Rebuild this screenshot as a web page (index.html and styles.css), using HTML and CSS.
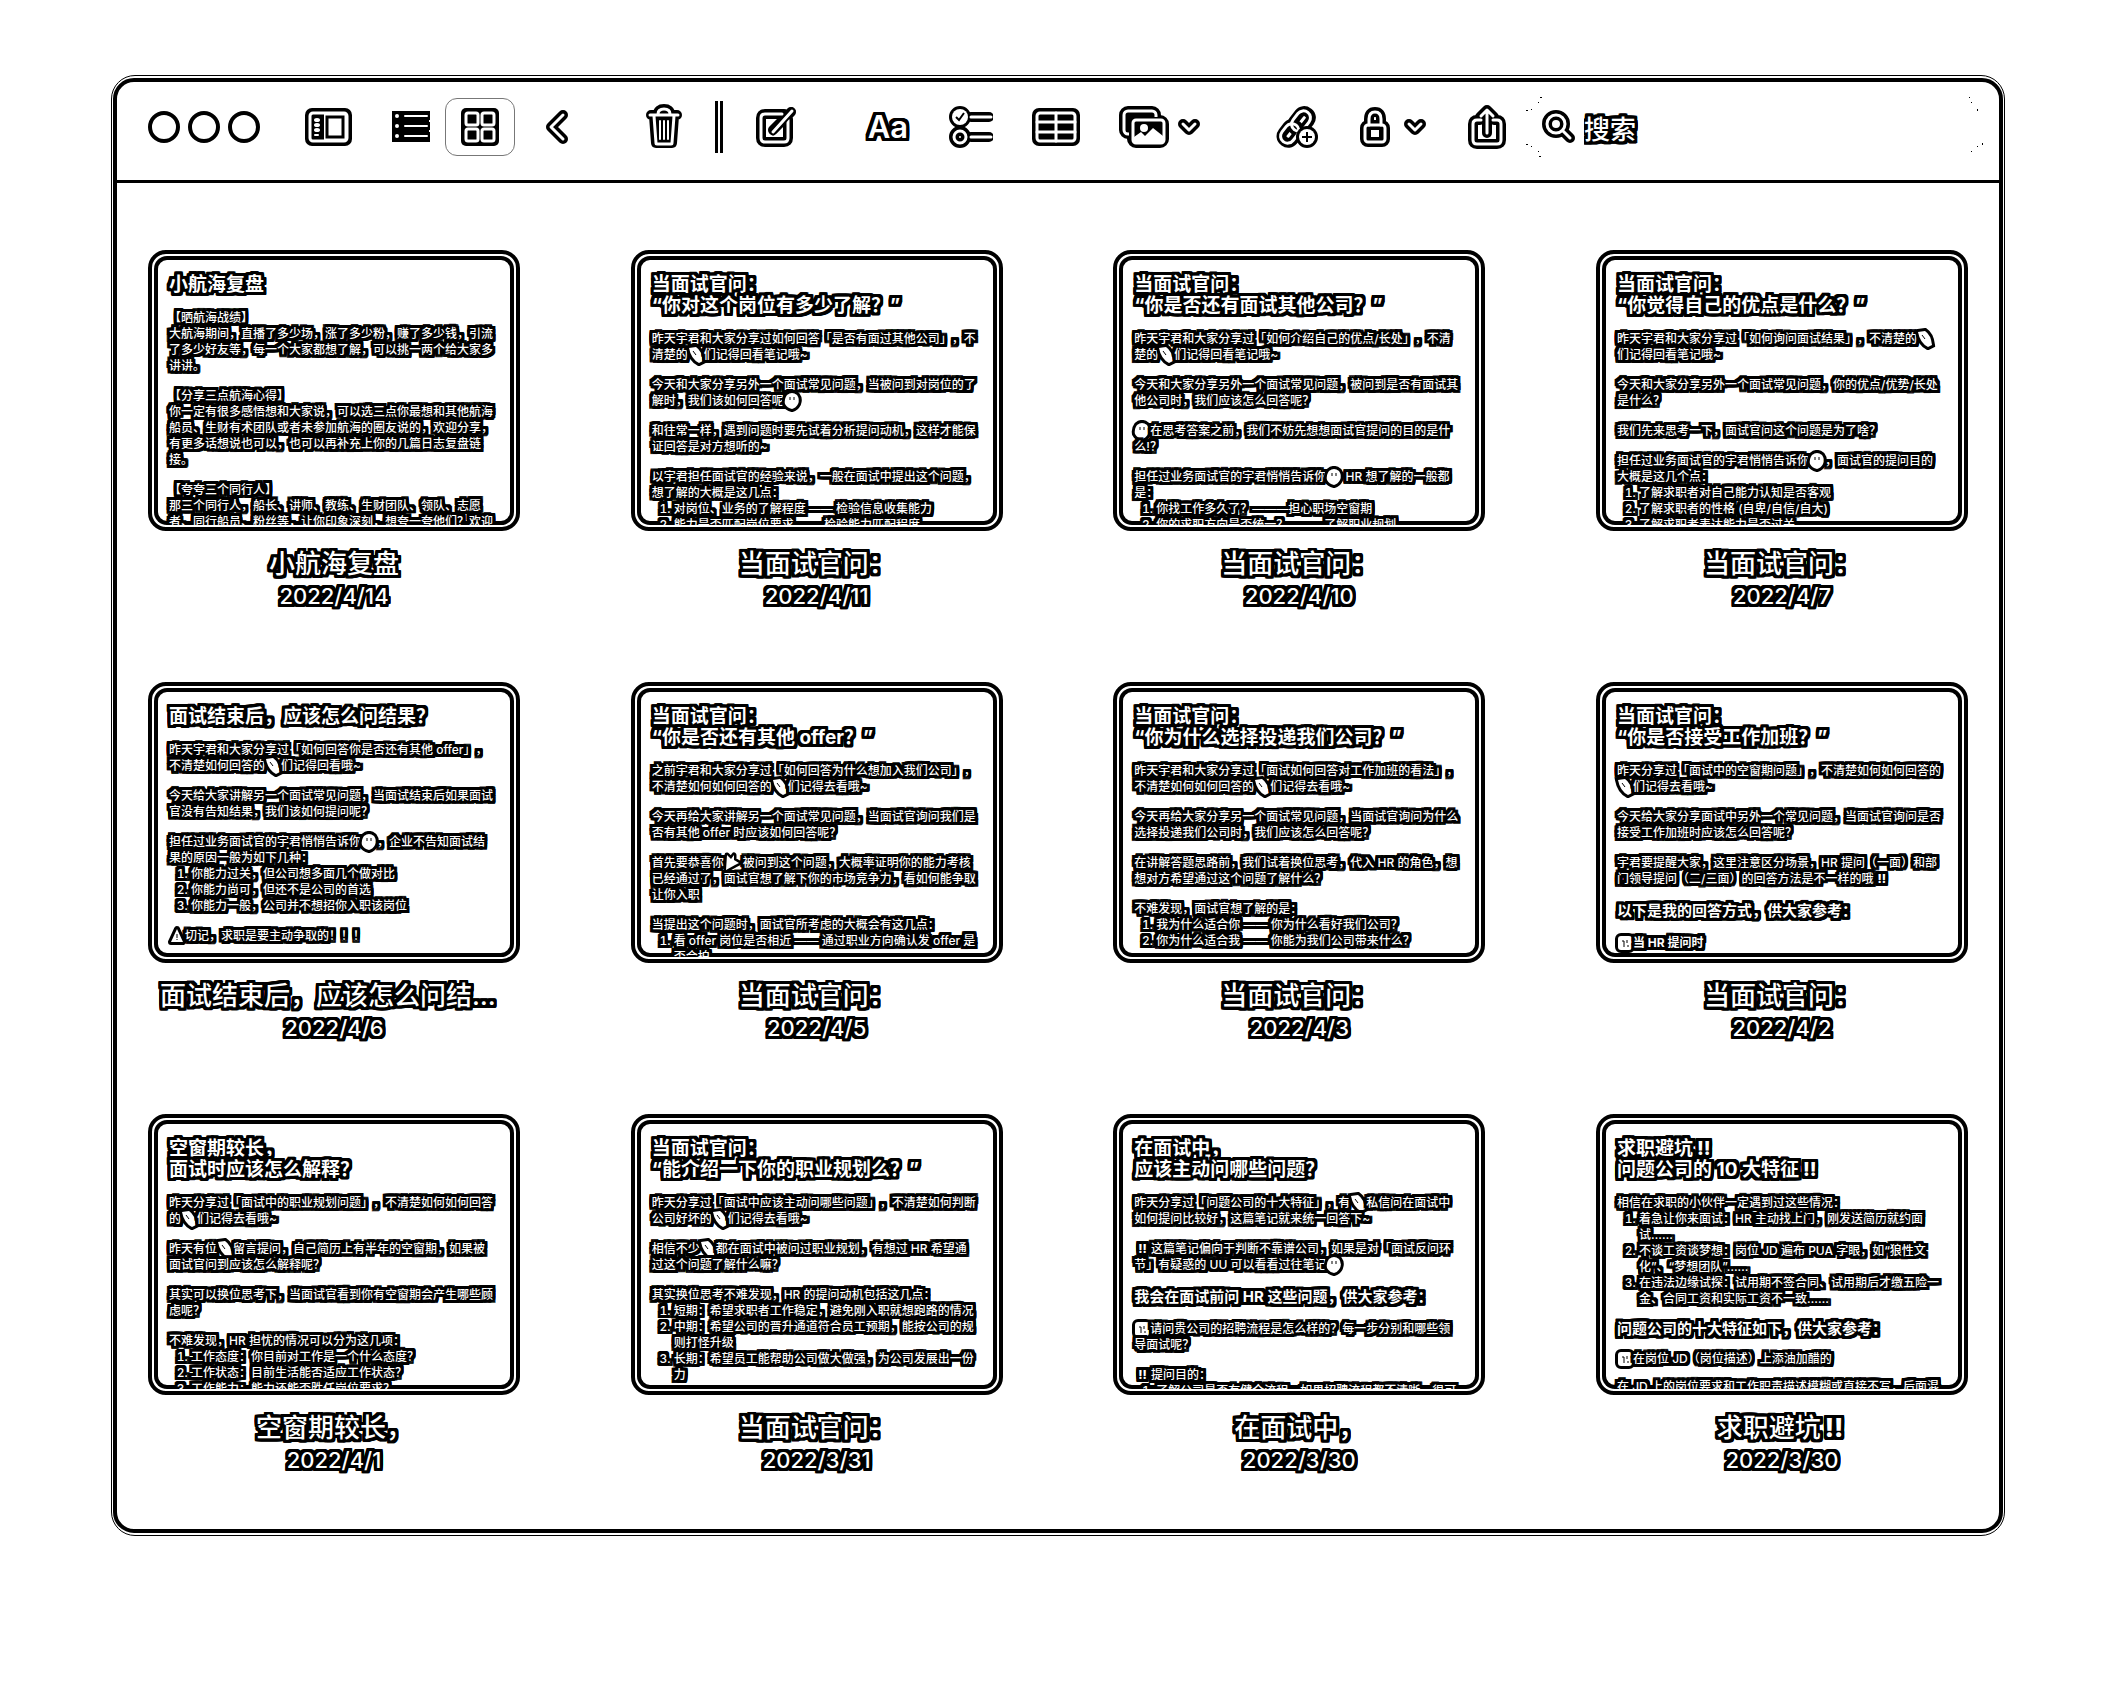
FILE: index.html
```html
<!DOCTYPE html>
<html lang="zh-CN">
<head>
<meta charset="utf-8">
<title>备忘录</title>
<link rel="stylesheet" href="styles.css">
</head>
<body>
<svg class="defs" aria-hidden="true">
  <symbol id="pen" viewBox="-3 -3 22 22"><path d="M1 1l7-1q6 4 7 14l-4 2Q3 12 1 1z" fill="#fff" stroke="#000" stroke-width="6" paint-order="stroke"/><path d="M5 4l3 4" stroke="#000"/></symbol>
  <symbol id="face" viewBox="-3 -3 22 22"><path d="M3 2q5-4 10 0 3 4 1 9-2 4-6 5-5-1-7-5-1-5 2-9z" fill="#fff" stroke="#000" stroke-width="6" paint-order="stroke"/><path d="M6 4v3M10 4v3" stroke="#000"/></symbol>
  <symbol id="warn" viewBox="-3 -3 22 22"><path d="M8 1l6 13H2z" fill="#fff" stroke="#000" stroke-width="6" stroke-linejoin="round" paint-order="stroke"/><path d="M8 6v4M8 11v1" stroke="#000"/></symbol>
  <symbol id="party" viewBox="-3 -3 22 22"><path d="M3 0l4 4 3-4v5l5 3-4 2-9 5z" fill="#fff" stroke="#000" stroke-width="5" stroke-linejoin="round" paint-order="stroke"/></symbol>
  <symbol id="key" viewBox="-3 -3 22 22"><rect x="1" y="1" width="14" height="14" rx="3" fill="#fff" stroke="#000" stroke-width="6" paint-order="stroke"/><path d="M5 6h2v6M10 5v3M11 10v2" fill="none" stroke="#000"/></symbol>
</svg>
<div class="window">
<div class="frame">
  <header class="toolbar">
    <div class="lights">
      <button aria-label="关闭"></button><button aria-label="最小化"></button><button aria-label="缩放"></button>
    </div>
    <button class="tool sidebar-tool" aria-label="边栏"><svg width="48" height="38"><rect width="47" height="38" rx="7"/><rect x="5" y="5" width="37" height="28" rx="3" fill="none" stroke="#fff" stroke-width="3"/><rect x="19" y="6" width="23" height="26" fill="#fff"/><rect x="22" y="9" width="16" height="20" fill="none" stroke="#000" stroke-width="3"/><g class="thin"><ellipse cx="12" cy="12" rx="2" ry="1"/><ellipse cx="12" cy="17" rx="2" ry="1"/><ellipse cx="12" cy="22" rx="2" ry="1"/><path d="M10 27h3"/></g></svg></button>
    <div class="views">
      <button class="tool" aria-label="列表"><svg width="40" height="34"><path d="M1 1h38v31H1z"/><g class="thin"><circle cx="6" cy="6" r="1"/><circle cx="6" cy="16" r="1"/><circle cx="6" cy="26" r="1"/><path d="M14 6h22M14 16h22M14 26h22"/></g><path d="M38 10h3v2h-3zM38 20h3v2h-3z" fill="#fff"/></svg></button>
      <button class="tool selected" aria-label="画廊"><svg width="40" height="38"><rect x="1" y="0" width="38" height="38" rx="5"/><g class="core"><rect x="6" y="5" width="12" height="12" rx="2"/><rect x="22" y="5" width="12" height="12" rx="2"/><rect x="6" y="21" width="12" height="12" rx="2"/><rect x="22" y="21" width="12" height="12" rx="2"/></g></svg></button>
    </div>
    <button class="tool back-tool" aria-label="返回"><svg width="24" height="34"><path class="halo" d="M18 5L6 17l12 12"/><path class="core" d="M18 5L6 17l12 12"/></svg></button>
    <div class="edit">
      <button class="tool" aria-label="删除"><svg width="36" height="46"><g class="halo"><path d="M5 11h26M12 10q0-5 6-5t6 5M8 12l2 27h16l2-27"/></g><path d="M9 12h18l-2 26H11z"/><g class="core"><path d="M4 11h28M12 10q0-5 6-5t6 5M8 12l2 27q0 1 1 1h14q1 0 1-1l2-27"/></g><path class="thin" d="M14 17v18M18 17v18M22 17v18"/></svg></button>
      <span class="divider"></span>
      <button class="tool" aria-label="新建"><svg width="42" height="42"><g class="halo"><path d="M28 8H9q-4 0-4 4v20q0 4 4 4h19q4 0 4-4V13M17 24L35 6"/></g><g class="core"><path d="M26 8H9q-4 0-4 4v20q0 4 4 4h19q4 0 4-4V14"/></g><path class="halo slim" d="M17 26L36 5"/><path class="core" d="M17 26L36 5"/></svg></button>
    </div>
    <div class="format">
      <button class="tool aa" aria-label="格式">Aa</button>
      <button class="tool" aria-label="核对清单"><svg width="44" height="42"><g class="halo"><circle cx="11" cy="11" r="6"/><circle cx="11" cy="31" r="6"/><path d="M22 11h18M22 31h18"/></g><circle cx="11" cy="11" r="8" fill="#fff"/><circle class="core" cx="11" cy="31" r="6"/><path class="core" d="M22 11h20M22 31h20"/><path d="M7 11l3 3 5-7" fill="none" stroke="#000" stroke-width="2"/></svg></button>
      <button class="tool" aria-label="表格"><svg width="48" height="38"><rect width="48" height="38" rx="7"/><g class="core"><rect x="5" y="5" width="38" height="28" rx="3"/><path d="M24 5v28M5 14h38M5 24h38"/></g></svg></button>
      <div class="pair">
        <button class="tool" aria-label="照片"><svg width="50" height="42"><g class="halo"><rect x="5" y="5" width="32" height="23" rx="4"/><rect x="13" y="14" width="32" height="23" rx="4"/></g><path d="M8 8h26v17H8z"/><rect class="core" x="5" y="5" width="32" height="23" rx="4"/><rect x="10" y="11" width="38" height="29" rx="5"/><rect class="core" x="14" y="14" width="31" height="23" rx="3"/><path d="M15 31l7-5 4 4 8-8 10 8v7H15z" fill="#fff"/><circle cx="25" cy="22" r="4" fill="#fff"/></svg></button>
        <button class="tool" aria-label="照片选项"><svg width="22" height="17"><path class="halo" d="M5 5l6 6 6-6"/><path class="core" d="M5 5l6 6 6-6"/></svg></button>
      </div>
    </div>
    <div class="share">
      <button class="tool" aria-label="链接"><svg width="44" height="42"><g class="halo"><rect x="16" y="9" width="22" height="13" rx="6" transform="rotate(-52 27 15)"/><rect x="6" y="21" width="20" height="13" rx="6" transform="rotate(-52 16 27)"/></g><g class="core"><rect x="16" y="8" width="22" height="14" rx="7" transform="rotate(-52 27 15)"/><rect x="5" y="20" width="21" height="14" rx="7" transform="rotate(-52 16 27)"/></g><circle cx="33" cy="31" r="11"/><circle cx="33" cy="31" r="8" fill="#fff"/><path d="M33 26v10M28 31h10" stroke="#000" stroke-width="2"/></svg></button>
      <div class="pair lock">
        <button class="tool" aria-label="锁定"><svg width="30" height="40"><g class="halo"><rect x="5" y="18" width="20" height="17" rx="3"/><path d="M9 18v-6q0-7 6-7t6 7v6"/></g><g class="core"><rect x="5" y="18" width="20" height="17" rx="3"/><path d="M9 18v-6q0-7 6-7t6 7v6"/></g><rect x="7" y="20" width="16" height="13"/><rect x="11" y="23" width="8" height="7" fill="#fff"/></svg></button>
        <button class="tool" aria-label="锁定选项"><svg width="22" height="17"><path class="halo" d="M5 5l6 6 6-6"/><path class="core" d="M5 5l6 6 6-6"/></svg></button>
      </div>
      <button class="tool" aria-label="共享"><svg width="38" height="44"><g class="halo"><path d="M12 15H9q-4 0-4 4v16q0 4 4 4h20q4 0 4-4V19q0-4-4-4h-3M19 28V6M12 12l7-7 7 7"/></g><g class="core"><path d="M13 15H9q-4 0-4 4v16q0 4 4 4h20q4 0 4-4V19q0-4-4-4h-4M19 28V6M13 11l6-6 6 6"/></g></svg></button>
    </div>
    <label class="search">
      <svg class="specks" width="16" height="62" aria-hidden="true"><path d="M14 1h2v1h-2zM12 6h1v1h-1zM0 14h2v1H0zM5 13h1v1H5zM0 48h2v1H0zM5 50h1v1H5zM12 55h1v1h-1zM13 60h2v1h-2z"/></svg>
      <svg width="34" height="34" aria-hidden="true"><g class="halo"><circle cx="14" cy="14" r="9"/><path d="M21 21l7 7"/></g><g class="core"><circle cx="14" cy="14" r="9"/><path d="M21 21l7 7"/></g></svg>
      <input type="search" placeholder="搜索" aria-label="搜索">
      <svg class="specks" width="16" height="62" aria-hidden="true"><path d="M2 1h1v1H2zM4 6h1v1H4zM10 13h1v2h-1zM15 47h1v2h-1zM10 50h1v1h-1zM4 55h1v1H4z"/></svg>
    </label>
  </header>
  <main class="notes">
    <article class="note"><div class="card"><div class="page">
      <h2>小航海复盘</h2>
      <p>【晒航海战绩】<br>大航海期间，直播了多少场，涨了多少粉，赚了多少钱，引流<br>了多少好友等，每一个大家都想了解，可以挑一两个给大家多<br>讲讲。</p>
      <p>【分享三点航海心得】<br>你一定有很多感悟想和大家说，可以选三点你最想和其他航海<br>船员、生财有术团队或者未参加航海的圈友说的，欢迎分享，<br>有更多话想说也可以，也可以再补充上你的几篇日志复盘链<br>接。</p>
      <p>【夸夸三个同行人】<br>那三个同行人，船长、讲师、教练、生财团队、领队、志愿<br>者、同行船员、粉丝等，让你印象深刻，想夸一夸他们？欢迎</p>
    </div></div><h3>小航海复盘</h3><time>2022/4/14</time></article>

    <article class="note"><div class="card"><div class="page">
      <h2>当面试官问：<br>“你对这个岗位有多少了解？”</h2>
      <p>昨天宇君和大家分享过如何回答「是否有面过其他公司」，不<br>清楚的<svg class="emoji"><use href="#pen"/></svg>们记得回看笔记哦~</p>
      <p>今天和大家分享另外一个面试常见问题，当被问到对岗位的了<br>解时，我们该如何回答呢<svg class="emoji"><use href="#face"/></svg></p>
      <p>和往常一样，遇到问题时要先试着分析提问动机，这样才能保<br>证回答是对方想听的~</p>
      <p>以宇君担任面试官的经验来说，一般在面试中提出这个问题，<br>想了解的大概是这几点：</p>
      <ol><li>对岗位、业务的了解程度 —— 检验信息收集能力</li><li>能力是否匹配岗位要求 —— 检验能力匹配程度</li></ol>
    </div></div><h3>当面试官问：</h3><time>2022/4/11</time></article>

    <article class="note"><div class="card"><div class="page">
      <h2>当面试官问：<br>“你是否还有面试其他公司？”</h2>
      <p>昨天宇君和大家分享过「如何介绍自己的优点/长处」，不清<br>楚的<svg class="emoji"><use href="#pen"/></svg>们记得回看笔记哦~</p>
      <p>今天和大家分享另外一个面试常见问题，被问到是否有面试其<br>他公司时，我们应该怎么回答呢？</p>
      <p><svg class="emoji"><use href="#face"/></svg>在思考答案之前，我们不妨先想想面试官提问的目的是什<br>么!？</p>
      <p>担任过业务面试官的宇君悄悄告诉你<svg class="emoji"><use href="#face"/></svg> HR 想了解的一般都<br>是：</p>
      <ol><li>你找工作多久了？———担心职场空窗期</li><li>你的求职方向是否统一？———了解职业规划</li></ol>
    </div></div><h3>当面试官问：</h3><time>2022/4/10</time></article>

    <article class="note"><div class="card"><div class="page">
      <h2>当面试官问：<br>“你觉得自己的优点是什么？”</h2>
      <p>昨天宇君和大家分享过「如何询问面试结果」，不清楚的<svg class="emoji"><use href="#pen"/></svg><br>们记得回看笔记哦~</p>
      <p>今天和大家分享另外一个面试常见问题，你的优点/优势/长处<br>是什么？</p>
      <p>我们先来思考一下，面试官问这个问题是为了啥？</p>
      <p>担任过业务面试官的宇君悄悄告诉你<svg class="emoji"><use href="#face"/></svg>，面试官的提问目的<br>大概是这几个点：</p>
      <ol><li>了解求职者对自己能力认知是否客观</li><li>了解求职者的性格 (自卑/自信/自大)</li><li>了解求职者表达能力是否过关</li></ol>
    </div></div><h3>当面试官问：</h3><time>2022/4/7</time></article>

    <article class="note"><div class="card"><div class="page">
      <h2>面试结束后，应该怎么问结果？</h2>
      <p>昨天宇君和大家分享过「如何回答你是否还有其他 offer」，<br>不清楚如何回答的<svg class="emoji"><use href="#pen"/></svg>们记得回看哦~</p>
      <p>今天给大家讲解另一个面试常见问题，当面试结束后如果面试<br>官没有告知结果，我们该如何提问呢？</p>
      <p>担任过业务面试官的宇君悄悄告诉你<svg class="emoji"><use href="#face"/></svg>，企业不告知面试结<br>果的原因一般为如下几种：</p>
      <ol><li>你能力过关，但公司想多面几个做对比</li><li>你能力尚可，但还不是公司的首选</li><li>你能力一般，公司并不想招你入职该岗位</li></ol>
      <p class="after"><svg class="emoji"><use href="#warn"/></svg>切记，求职是要主动争取的！！！</p>
    </div></div><h3>面试结束后，应该怎么问结果？</h3><time>2022/4/6</time></article>

    <article class="note"><div class="card"><div class="page">
      <h2>当面试官问：<br>“你是否还有其他 offer？”</h2>
      <p>之前宇君和大家分享过「如何回答为什么想加入我们公司」，<br>不清楚如何如何回答的<svg class="emoji"><use href="#pen"/></svg>们记得去看哦~</p>
      <p>今天再给大家讲解另一个面试常见问题，当面试官询问我们是<br>否有其他 offer 时应该如何回答呢？</p>
      <p>首先要恭喜你<svg class="emoji"><use href="#party"/></svg> 被问到这个问题，大概率证明你的能力考核<br>已经通过了，面试官想了解下你的市场竞争力，看如何能争取<br>让你入职</p>
      <p>当提出这个问题时，面试官所考虑的大概会有这几点：</p>
      <ol><li>看 offer 岗位是否相近 —— 通过职业方向确认发 offer 是<br>否合拍</li></ol>
    </div></div><h3>当面试官问：</h3><time>2022/4/5</time></article>

    <article class="note"><div class="card"><div class="page">
      <h2>当面试官问：<br>“你为什么选择投递我们公司？”</h2>
      <p>昨天宇君和大家分享过「面试如何回答对工作加班的看法」，<br>不清楚如何如何回答的<svg class="emoji"><use href="#pen"/></svg>们记得去看哦~</p>
      <p>今天再给大家分享另一个面试常见问题，当面试官询问为什么<br>选择投递我们公司时，我们应该怎么回答呢？</p>
      <p>在讲解答题思路前，我们试着换位思考，代入 HR 的角色，想<br>想对方希望通过这个问题了解什么？</p>
      <p>不难发现，面试官想了解的是：</p>
      <ol><li>我为什么适合你 —— 你为什么看好我们公司？</li><li>你为什么适合我 —— 你能为我们公司带来什么？</li></ol>
    </div></div><h3>当面试官问：</h3><time>2022/4/3</time></article>

    <article class="note"><div class="card"><div class="page">
      <h2>当面试官问：<br>“你是否接受工作加班？”</h2>
      <p>昨天分享过「面试中的空窗期问题」，不清楚如何如何回答的<br><svg class="emoji"><use href="#pen"/></svg>们记得去看哦~</p>
      <p>今天给大家分享面试中另外一个常见问题，当面试官询问是否<br>接受工作加班时应该怎么回答呢？</p>
      <p>宇君要提醒大家，这里注意区分场景，HR 提问（一面）和部<br>门领导提问（二/三面）的回答方法是不一样的哦<b class="bang">!!</b></p>
      <h4>以下是我的回答方式，供大家参考：</h4>
      <p><svg class="emoji"><use href="#key"/></svg><b>当 HR 提问时</b></p>
    </div></div><h3>当面试官问：</h3><time>2022/4/2</time></article>

    <article class="note"><div class="card"><div class="page">
      <h2>空窗期较长，<br>面试时应该怎么解释？</h2>
      <p>昨天分享过「面试中的职业规划问题」，不清楚如何如何回答<br>的<svg class="emoji"><use href="#pen"/></svg>们记得去看哦~</p>
      <p>昨天有位<svg class="emoji"><use href="#pen"/></svg>留言提问，自己简历上有半年的空窗期，如果被<br>面试官问到应该怎么解释呢？</p>
      <p>其实可以换位思考下，当面试官看到你有空窗期会产生哪些顾<br>虑呢？</p>
      <p>不难发现，HR 担忧的情况可以分为这几项：</p>
      <ol><li>工作态度：你目前对工作是一个什么态度？</li><li>工作状态：目前生活能否适应工作状态？</li><li>工作能力：能力还能否胜任岗位要求？</li></ol>
    </div></div><h3>空窗期较长，</h3><time>2022/4/1</time></article>

    <article class="note"><div class="card"><div class="page">
      <h2>当面试官问：<br>“能介绍一下你的职业规划么？”</h2>
      <p>昨天分享过「面试中应该主动问哪些问题」，不清楚如何判断<br>公司好坏的<svg class="emoji"><use href="#pen"/></svg>们记得去看哦~</p>
      <p>相信不少<svg class="emoji"><use href="#pen"/></svg>都在面试中被问过职业规划，有想过 HR 希望通<br>过这个问题了解什么嘛？</p>
      <p>其实换位思考不难发现，HR 的提问动机包括这几点：</p>
      <ol><li>短期：希望求职者工作稳定，避免刚入职就想跑路的情况</li><li>中期：希望公司的晋升通道符合员工预期，能按公司的规<br>则打怪升级</li><li>长期：希望员工能帮助公司做大做强，为公司发展出一份<br>力</li></ol>
    </div></div><h3>当面试官问：</h3><time>2022/3/31</time></article>

    <article class="note"><div class="card"><div class="page">
      <h2>在面试中，<br>应该主动问哪些问题？</h2>
      <p>昨天分享过「问题公司的十大特征」，有<svg class="emoji"><use href="#pen"/></svg>私信问在面试中<br>如何提问比较好，这篇笔记就来统一回答下~</p>
      <p><b class="bang">!!</b>这篇笔记偏向于判断不靠谱公司，如果是对「面试反问环<br>节」有疑惑的 UU 可以看看过往笔记<svg class="emoji"><use href="#face"/></svg></p>
      <h4>我会在面试前问 HR 这些问题，供大家参考：</h4>
      <p><svg class="emoji"><use href="#key"/></svg>请问贵公司的招聘流程是怎么样的？每一步分别和哪些领<br>导面试呢？</p>
      <p><b class="bang">!!</b>提问目的：</p>
      <ol><li>了解公司是否有健全流程，如果招聘流程都不清晰，很可</li></ol>
    </div></div><h3>在面试中，</h3><time>2022/3/30</time></article>

    <article class="note"><div class="card"><div class="page tight">
      <h2>求职避坑<b class="bang">!!</b><br>问题公司的 10 大特征<b class="bang">!!</b></h2>
      <p>相信在求职的小伙伴一定遇到过这些情况：</p>
      <ol><li>着急让你来面试：HR 主动找上门，刚发送简历就约面<br>试……</li><li>不谈工资谈梦想：岗位 JD 遍布 PUA 字眼，如“狼性文<br>化”、“梦想团队”……</li><li>在违法边缘试探：试用期不签合同、试用期后才缴五险一<br>金、合同工资和实际工资不一致……</li></ol>
      <h4 class="after">问题公司的十大特征如下，供大家参考：</h4>
      <p><svg class="emoji"><use href="#key"/></svg>在岗位 JD（岗位描述）上添油加醋的</p>
      <p>在 JD 上的岗位要求和工作职责描述模糊或直接不写，后面混</p>
    </div></div><h3>求职避坑<b class="bang">!!</b></h3><time>2022/3/30</time></article>
  </main>
</div>
</div>
</body>
</html>
```
FILE: styles.css
```css
* { box-sizing: border-box; }

body {
  margin: 0;
  padding: 75px 111px 146px;
  background: #fff;
  color: #fff;
  font-family: Inter, "Noto Sans CJK SC", sans-serif;
  font-weight: 500;
  text-spacing-trim: space-all;
  --outline:
    1px 0 #000, -1px 0 #000, 0 1px #000, 0 -1px #000,
    1px 1px #000, -1px 1px #000, 1px -1px #000, -1px -1px #000,
    2px 0 #000, -2px 0 #000, 0 2px #000, 0 -2px #000,
    2px 2px #000, -2px 2px #000, 2px -2px #000, -2px -2px #000,
    3px 0 #000, -3px 0 #000, 0 3px #000, 0 -3px #000,
    3px 1px #000, -3px 1px #000, 3px -1px #000, -3px -1px #000,
    1px 3px #000, -1px 3px #000, 1px -3px #000, -1px -3px #000,
    3px 2px #000, -3px 2px #000, 3px -2px #000, -3px -2px #000,
    2px 3px #000, -2px 3px #000, 2px -3px #000, -2px -3px #000,
    3px 3px #000, -3px 3px #000, 3px -3px #000, -3px -3px #000;
}

.defs { position: absolute; width: 0; height: 0; }

h2, h3, h4, p, ol { margin: 0; }

.window {
  border: 1px solid #000;
  border-radius: 24px;
  padding: 2px 1px;
}

.frame {
  border: 4px solid #000;
  border-radius: 21px;
}

/* Toolbar */
.toolbar {
  display: flex;
  align-items: center;
  height: 101px;
  padding: 0 16px 8px 31px;
  border-bottom: 3px solid #000;
}

.toolbar button {
  padding: 0;
  border: 0;
  background: none;
  flex: none;
}

.toolbar svg { display: block; flex: none; }

.lights { display: flex; gap: 8px; }

.toolbar .lights button {
  width: 32px;
  height: 32px;
  border: 4px solid #000;
  border-radius: 50%;
}

.halo, .core, .thin {
  fill: none;
  stroke-linecap: round;
  stroke-linejoin: round;
}
.halo { stroke: #000; stroke-width: 10px; }
.slim { stroke-width: 7px; }
.core { stroke: #fff; stroke-width: 3px; }
.thin { stroke: #fff; stroke-width: 2px; }

.toolbar .sidebar-tool { margin-left: 45px; }

.views {
  display: flex;
  align-items: center;
  gap: 14px;
  margin-left: 38px;
}

.toolbar .selected {
  display: grid;
  place-items: center;
  width: 70px;
  height: 58px;
  border: 1px solid #777;
  border-radius: 12px;
}

.toolbar .back-tool { margin-left: 30px; }

.edit {
  display: flex;
  align-items: center;
  gap: 33px;
  margin-left: 77px;
}

.divider {
  width: 8px;
  height: 52px;
  border: solid #000;
  border-width: 0 3px;
}

.format {
  display: flex;
  align-items: center;
  gap: 39px;
  margin-left: 68px;
}

.toolbar .aa {
  width: 44px;
  color: #fff;
  font: 600 31px/36px Inter, sans-serif;
  text-shadow: var(--outline);
}

.pair { display: flex; align-items: center; gap: 9px; }
.lock { gap: 14px; }

.share {
  display: flex;
  align-items: center;
  gap: 42px;
  margin-left: 74px;
}

.search {
  display: flex;
  align-items: center;
  flex: 1;
  min-width: 0;
  height: 62px;
  margin-left: 20px;
}

.search input {
  flex: 1;
  min-width: 0;
  height: 50px;
  margin-left: 4px;
  padding: 4px 4px 0;
  border: 0;
  outline: 0;
  background: none;
  color: #fff;
  font: 500 26px/46px Inter, "Noto Sans CJK SC", sans-serif;
  text-shadow: var(--outline);
}

.search input::placeholder { color: #fff; opacity: 1; }

/* Note gallery */
.notes {
  display: grid;
  grid-template-columns: repeat(4, 372px);
  justify-content: space-between;
  row-gap: 70px;
  padding: 67px 31px 53px;
}

.note {
  display: flex;
  flex-direction: column;
  align-items: center;
  text-shadow: var(--outline);
}

.card {
  width: 100%;
  height: 281px;
  margin-bottom: 17px;
  padding: 2px;
  border: 4px solid #000;
  border-radius: 18px;
}

.page {
  height: 100%;
  padding: 18px 15px 0;
  border-radius: 13px;
  box-shadow: inset 0 0 0 4px #000;
  overflow: hidden;
  font-size: 12px;
  line-height: 16px;
  white-space: nowrap;
}

.page h2 {
  margin-bottom: 15px;
  font-size: 19px;
  font-weight: 700;
  line-height: 21px;
}

.page p + p, .page h4, .page h4 + p, .page .after { margin-top: 14px; }
.tight h4 + p, .tight p + p, .tight .after { margin-top: 12px; }

.page h4 {
  font-size: 15px;
  font-weight: 700;
  line-height: 20px;
}

.page ol { padding-left: 22px; }

.bang { padding: 0 4px; font-weight: 800; }

.emoji {
  width: 22px;
  height: 22px;
  margin: -3px;
  vertical-align: top;
}

.note h3 {
  max-width: 356px;
  padding: 0 4px;
  overflow: hidden;
  text-overflow: ellipsis;
  white-space: nowrap;
  font-size: 26px;
  font-weight: 500;
  line-height: 32px;
}

.note time {
  font-size: 22px;
  line-height: 32px;
}
```
